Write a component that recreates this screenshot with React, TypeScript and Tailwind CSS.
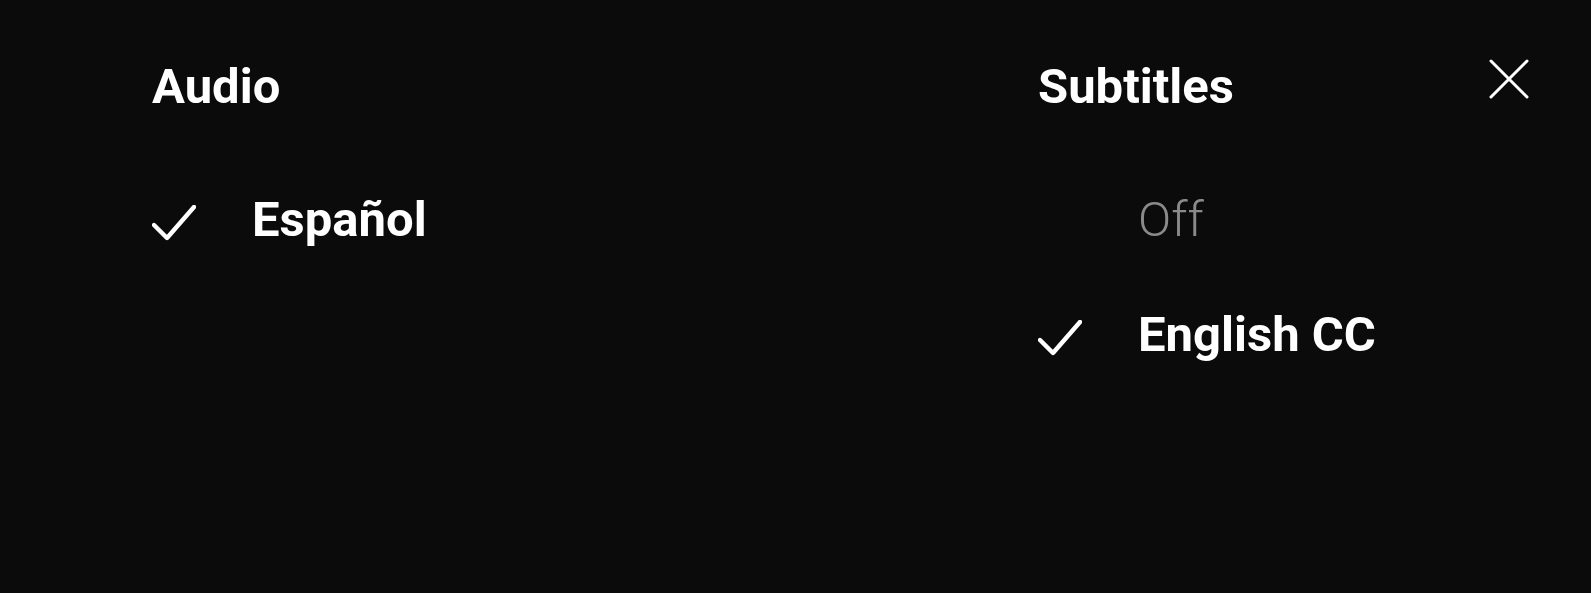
function Check() {
  return (
    <svg width="44" height="36" viewBox="0 0 44 36" fill="none" className="block translate-y-[3px]">
      <polyline
        points="2,20 15,33 42,2"
        stroke="white"
        strokeWidth="4.4"
        strokeLinecap="round"
        strokeLinejoin="round"
      />
    </svg>
  );
}

interface OptionProps {
  label: string;
  selected?: boolean;
}

function Option({ label, selected }: OptionProps) {
  return (
    <div className="flex items-center h-[49px]">
      <div className="w-[100px] shrink-0">{selected && <Check />}</div>
      <span
        className={
          selected
            ? "text-[49px] leading-none font-bold text-white"
            : "text-[49px] leading-none font-light text-[#8a8a8a]"
        }
      >
        {label}
      </span>
    </div>
  );
}

export default function App() {
  return (
    <div
      className="w-full h-[593px] bg-[#0b0b0b] flex pl-[152px] pt-[62px] pr-[62px]"
      style={{ fontFamily: "Roboto, 'Noto Sans', sans-serif" }}
    >
      <section className="w-[886px] shrink-0">
        <h2 className="text-[49px] leading-none font-bold text-white">Audio</h2>
        <div className="mt-[84px] flex flex-col gap-[66px]">
          <Option label="Español" selected />
        </div>
      </section>

      <section className="flex-1">
        <h2 className="text-[49px] leading-none font-bold text-white">Subtitles</h2>
        <div className="mt-[84px] flex flex-col gap-[66px]">
          <Option label="Off" />
          <Option label="English CC" selected />
        </div>
      </section>

      <button className="shrink-0 -mt-[3px] w-[40px] h-[40px]" aria-label="Close">
        <svg width="40" height="40" viewBox="0 0 40 40" fill="none" className="block">
          <path d="M2 2 L38 38 M38 2 L2 38" stroke="white" strokeWidth="3" strokeLinecap="round" />
        </svg>
      </button>
    </div>
  );
}
